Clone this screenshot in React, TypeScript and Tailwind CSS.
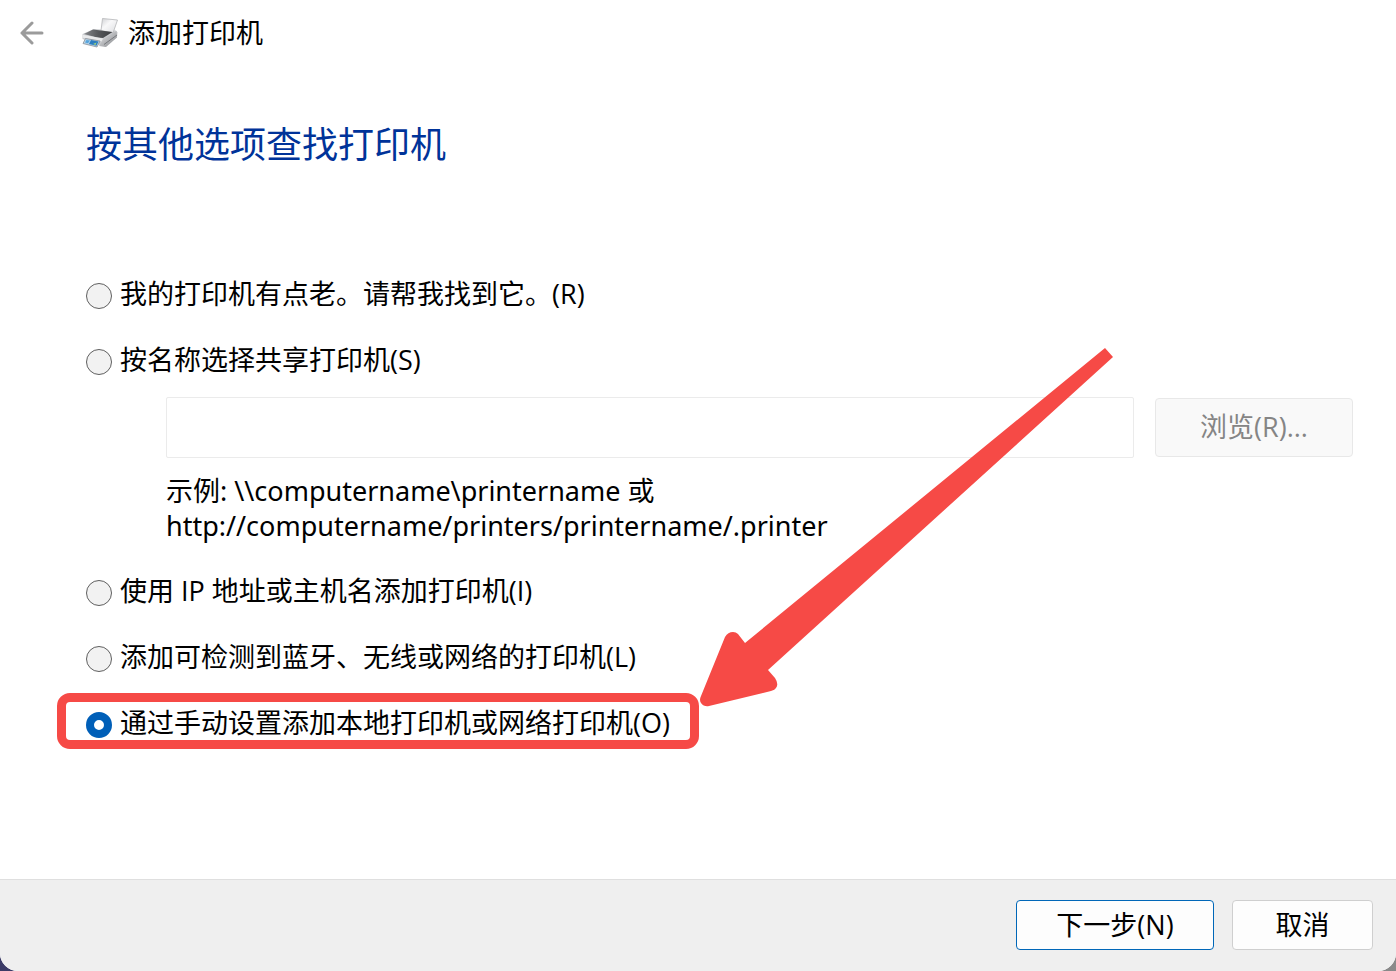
import { useState } from "react";

interface PrinterOptionProps {
  value: string;
  label: string;
  selected: string;
  onSelect: (value: string) => void;
}

function PrinterOption({ value, label, selected, onSelect }: PrinterOptionProps) {
  return (
    <label className="flex w-fit items-center gap-2">
      <input
        type="radio"
        name="find-printer"
        value={value}
        checked={selected === value}
        onChange={() => onSelect(value)}
        className="mt-1 size-[26px] shrink-0 appearance-none rounded-full border border-[#5f5f5f] bg-[#f2f2f2] checked:border-8 checked:border-[#005fb8] checked:bg-white"
      />
      <span className="leading-9">{label}</span>
    </label>
  );
}

function PrinterIcon() {
  return (
    <svg viewBox="0 0 36 30" className="h-[30px] w-9 shrink-0" aria-hidden="true">
      <defs>
        <linearGradient id="sheet" x1="0" y1="0" x2="1" y2="1">
          <stop offset="0" stopColor="#cfd0d3" />
          <stop offset="0.4" stopColor="#f8f8f9" />
          <stop offset="1" stopColor="#dcdde0" />
        </linearGradient>
        <linearGradient id="lid" x1="0" y1="0" x2="1" y2="0">
          <stop offset="0" stopColor="#85878a" />
          <stop offset="0.5" stopColor="#56585b" />
          <stop offset="1" stopColor="#3c3e41" />
        </linearGradient>
        <linearGradient id="side" x1="0" y1="0" x2="1" y2="1">
          <stop offset="0" stopColor="#e9eaec" />
          <stop offset="1" stopColor="#85878b" />
        </linearGradient>
      </defs>
      <path d="M0.5 16 L12 11 L34 12.5 L35.5 14.5 L35 19 L23 28.5 L18 27 L0.5 21 Z" fill="#c9cbce" />
      <path d="M21 21 L34.5 13 L35 19.5 L24 29 L17 28 Z" fill="url(#side)" />
      <path d="M22 26.5 L35 17" stroke="#77797d" strokeWidth="1" />
      <path d="M20.5 0.5 L35.5 2 L31 15 L19 12.5 Z" fill="url(#sheet)" stroke="#b5b6b9" strokeWidth="0.8" />
      <path d="M2 16 L11 11.5 L30.5 14 L21 20 L15 19.5 Z" fill="url(#lid)" />
      <path d="M0.8 16.8 L21 20.5 L19.5 23.5 L1 19.8 Z" fill="#e9eaeb" />
      <path d="M3.5 20.5 L18 23 L15 29 L1 25.5 Z" fill="#b4d2e8" stroke="#8c9097" strokeWidth="0.8" />
      <path d="M9 22 L16.5 23.5 L14.5 27.8 L7 26 Z" fill="#2b7cc0" />
      <path d="M4.5 22 L8 22.5 L6 25.3 L3 24.6 Z" fill="#58a5dc" />
      <path d="M11 26 L14.5 24.5 L13.5 27 Z" fill="#9ed279" />
    </svg>
  );
}

function BackIcon() {
  return (
    <svg
      viewBox="0 0 24 24"
      className="size-6"
      fill="none"
      stroke="#9b9b9b"
      strokeWidth="3"
      strokeLinecap="round"
      strokeLinejoin="round"
      aria-hidden="true"
    >
      <path d="M12 2 L2 12 L12 22 M2 12 H22" />
    </svg>
  );
}

// Red frame round the recommended option, with the arrow that points at its corner
function Callout() {
  return (
    <div className="pointer-events-none absolute -inset-x-[29px] -top-3 -bottom-2 rounded-[13px] border-[9px] border-[#f64a46]">
      <svg
        viewBox="0 0 414 360"
        className="absolute bottom-[33px] left-full ml-[10px] h-[360px] w-[414px] max-w-none"
        fill="#f64a46"
        aria-hidden="true"
      >
        <path d="M405 1 L413 10 L68 323 L75 331 Q79 337 76 341 Q75 343 71 344 L9 359 Q4 360 1 356 Q-1 353 1 349 L25 290 Q28 285 33 285 Q36 285 38 287 L45 296 Z" />
      </svg>
    </div>
  );
}

export default function App() {
  const [selected, setSelected] = useState("manual");

  return (
    <div className="bg-linear-to-r from-[#3b3a66] to-[#8a8a8a] font-['Open_Sans','Noto_Sans_CJK_SC',sans-serif] text-[27px] text-black">
      <div className="flex min-h-screen flex-col overflow-hidden rounded-b-[18px] bg-white">
        <header className="flex h-[66px] items-center pl-5">
          <button type="button" aria-label="返回" className="mr-[38px]">
            <BackIcon />
          </button>
          <PrinterIcon />
          <span className="ml-[10px] leading-9">添加打印机</span>
        </header>

        <main className="flex-1 pr-[43px] pb-10 pl-[86px]">
          <h1 className="mt-[55px] text-[36px] leading-[48px] text-[#003399]">按其他选项查找打印机</h1>

          <div className="mt-[107px] flex flex-col gap-[30px]">
            <PrinterOption
              value="old"
              label="我的打印机有点老。请帮我找到它。(R)"
              selected={selected}
              onSelect={setSelected}
            />
            <div>
              <PrinterOption
                value="shared"
                label="按名称选择共享打印机(S)"
                selected={selected}
                onSelect={setSelected}
              />
              <div className="mt-[19px] ml-20">
                <div className="flex items-center gap-[21px]">
                  <input
                    type="text"
                    aria-label="共享打印机名称"
                    disabled
                    className="h-[61px] min-w-0 flex-1 rounded-xs border border-[#ebebeb] bg-white px-3"
                  />
                  <button
                    type="button"
                    disabled
                    className="h-[59px] w-[198px] rounded-sm border border-[#e8e8e8] bg-[#f9f9f9] text-[#858585]"
                  >
                    浏览(R)...
                  </button>
                </div>
                <p className="mt-[15px] font-['Noto_Sans','Noto_Sans_CJK_SC',sans-serif] leading-[35px]">
                  示例: \\computername\printername 或
                  <br />
                  http://computername/printers/printername/.printer
                </p>
              </div>
            </div>
            <PrinterOption
              value="ip"
              label="使用 IP 地址或主机名添加打印机(I)"
              selected={selected}
              onSelect={setSelected}
            />
            <PrinterOption
              value="detect"
              label="添加可检测到蓝牙、无线或网络的打印机(L)"
              selected={selected}
              onSelect={setSelected}
            />
            <div className="relative w-fit">
              <PrinterOption
                value="manual"
                label="通过手动设置添加本地打印机或网络打印机(O)"
                selected={selected}
                onSelect={setSelected}
              />
              <Callout />
            </div>
          </div>
        </main>

        <footer className="flex justify-end gap-[18px] border-t border-[#dfdfdf] bg-[#efefef] pt-5 pr-[23px] pb-[21px]">
          <button type="button" className="h-[50px] w-[198px] rounded-sm border border-[#0067b8] bg-[#fdfdfd]">
            下一步(N)
          </button>
          <button type="button" className="h-[50px] w-[141px] rounded-sm border border-[#cfcfcf] bg-[#fdfdfd]">
            取消
          </button>
        </footer>
      </div>
    </div>
  );
}
